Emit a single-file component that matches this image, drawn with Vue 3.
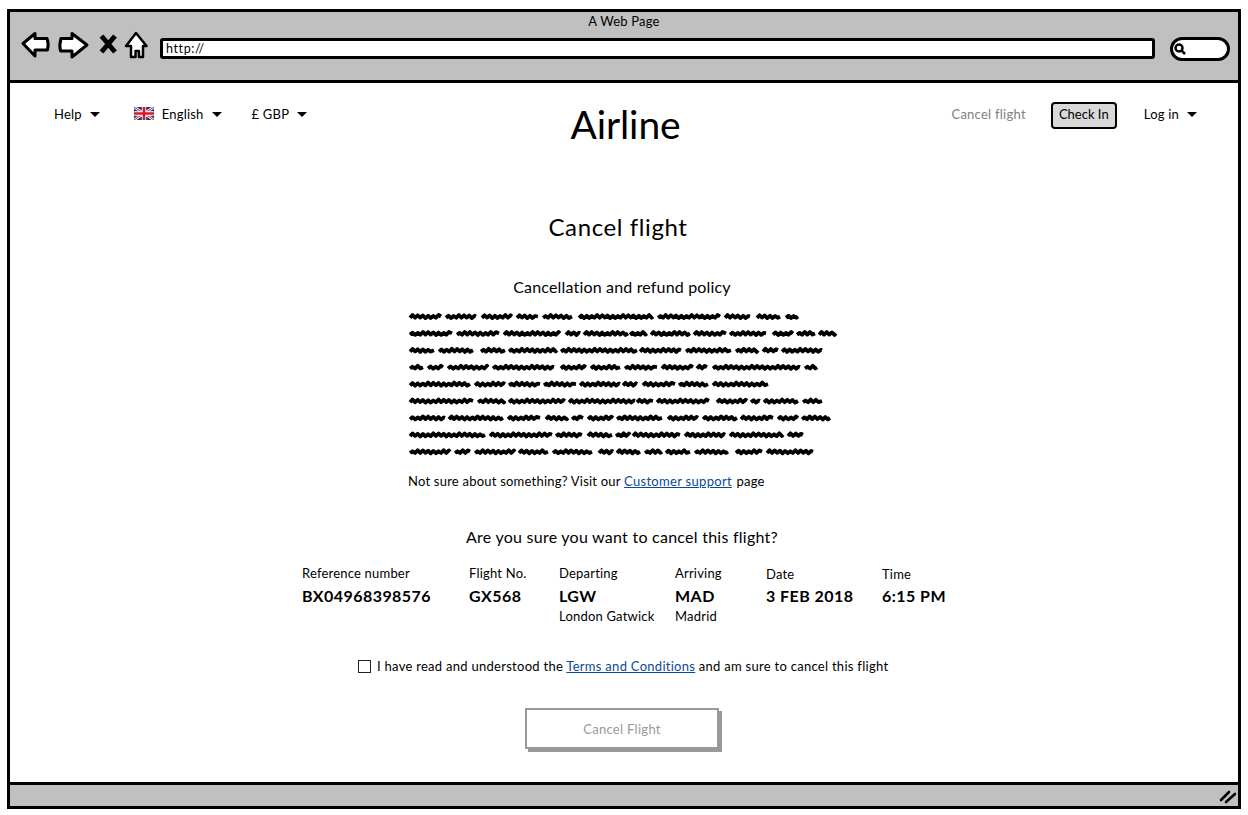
<template>
  <div class="browser">
    <header class="chrome">
      <div class="page-title">A Web Page</div>
      <div class="toolbar">
        <svg class="tool-icons" width="128" height="30" viewBox="0 0 128 30">
          <path d="M3 13.500 15 3.500V8.500H27Q29 14 27.500 20H15V26Z" fill="#fff" stroke="#000" stroke-width="3" stroke-linejoin="round" />
          <path d="M67 15 52 3.500V8.500H41Q39 15 40.500 21H52V27Z" fill="#fff" stroke="#000" stroke-width="3" stroke-linejoin="round" />
          <path d="M81.500 6 95 22M95 6 81.500 22" fill="none" stroke="#000" stroke-width="5" />
          <path d="M116 3 106 16H111V27H115.500V21H119V27H123V16H126.500Z" fill="#fff" stroke="#000" stroke-width="2.500" stroke-linejoin="round" />
        </svg>
        <div class="url-bar">http://</div>
        <div class="search-pill">
          <svg width="14" height="14" viewBox="0 0 14 14">
            <circle cx="6" cy="6" r="3.500" fill="none" stroke="#000" stroke-width="2.500" />
            <path d="M8.500 8.500 12 12" stroke="#000" stroke-width="2.500" />
          </svg>
        </div>
      </div>
    </header>

    <main class="page">
      <nav class="topnav">
        <div class="nav-group nav-left">
          <a class="nav-item">Help <i class="caret"></i></a>
          <a class="nav-item lang">
            <svg width="20" height="13" viewBox="0 0 60 39">
              <rect width="60" height="39" fill="#1f2f7a" />
              <path d="M0 0 60 39M60 0 0 39" stroke="#fff" stroke-width="8" />
              <path d="M0 0 60 39M60 0 0 39" stroke="#d4182a" stroke-width="3" />
              <path d="M30 0V39M0 19.500H60" stroke="#fff" stroke-width="13" />
              <path d="M30 0V39M0 19.500H60" stroke="#d4182a" stroke-width="8" />
            </svg>
            English <i class="caret"></i>
          </a>
          <a class="nav-item">£ GBP <i class="caret"></i></a>
        </div>
        <div class="logo">Airline</div>
        <div class="nav-group nav-right">
          <a class="nav-item muted">Cancel flight</a>
          <a class="checkin">Check In</a>
          <a class="nav-item">Log in <i class="caret"></i></a>
        </div>
      </nav>

      <h1 class="title">Cancel flight</h1>
      <h2 class="subtitle">Cancellation and refund policy</h2>

      <svg class="scribble" width="430" height="152" viewBox="0 0 430 152" role="img" aria-label="Policy text placeholder">
        <path v-for="(d, i) in scribbles" :key="i" :d="d" fill="none" stroke="#000" stroke-width="3.800" stroke-linejoin="round" />
      </svg>

      <p class="support">Not sure about something? Visit our <a class="link">Customer support</a> page</p>

      <h3 class="question">Are you sure you want to cancel this flight?</h3>

      <div class="flight">
        <div v-for="col in flight" :key="col.label" class="flight-col">
          <div class="label">{{ col.label }}</div>
          <div class="value">{{ col.value }}</div>
          <div v-if="col.place" class="place">{{ col.place }}</div>
        </div>
      </div>

      <label class="agree">
        <span class="checkbox"></span>
        <span>I have read and understood the <a class="link">Terms and Conditions</a> and am sure to cancel this flight</span>
      </label>

      <button class="cancel-btn" disabled>Cancel Flight</button>
    </main>

    <footer class="statusbar">
      <svg width="18" height="16" viewBox="0 0 18 16">
        <path d="M2 12 10 4M7 14 16 6" stroke="#000" stroke-width="2.600" stroke-linecap="round" />
      </svg>
    </footer>
  </div>
</template>

<script setup>
import { computed } from "vue";

// word extents of the scribbled paragraph, one row per line
const lines = [
  [[2, 33], [38, 68], [74, 104], [109, 130], [135, 164], [171, 245], [250, 312], [317, 342], [349, 372], [378, 390]],
  [[2, 44], [49, 91], [96, 152], [158, 172], [176, 220], [222, 239], [243, 282], [286, 318], [322, 358], [365, 385], [389, 407], [411, 428]],
  [[2, 26], [31, 65], [73, 97], [101, 149], [153, 229], [232, 273], [278, 323], [328, 350], [355, 370], [374, 414]],
  [[2, 15], [20, 35], [40, 80], [85, 146], [153, 178], [183, 212], [217, 249], [254, 285], [289, 299], [305, 392], [397, 409]],
  [[2, 62], [67, 97], [101, 132], [136, 168], [172, 212], [215, 229], [235, 267], [271, 300], [305, 360]],
  [[2, 65], [70, 97], [101, 157], [161, 227], [229, 245], [249, 301], [309, 339], [343, 352], [356, 390], [395, 414]],
  [[2, 37], [41, 95], [100, 132], [138, 160], [164, 175], [180, 205], [209, 254], [260, 290], [295, 329], [333, 365], [370, 390], [394, 422]],
  [[2, 77], [82, 144], [148, 174], [180, 204], [208, 222], [225, 272], [277, 317], [322, 375], [380, 395]],
  [[2, 42], [47, 62], [67, 107], [111, 140], [145, 184], [191, 205], [209, 232], [237, 254], [258, 282], [287, 320], [328, 354], [359, 405]],
];

const scribbles = computed(() =>
  lines.flatMap((words, row) => {
    const y = 7 + row * 16.9;
    return words.map(([from, to]) => {
      let d = `M${from} ${y + 0.8}`;
      let up = true;
      let n = from + row;
      for (let x = from + 2.5; x < to - 1; x += 2.6) {
        // uneven bumps so the ink looks hand drawn
        const bump = ((n * 7) % 5) * 0.25;
        d += ` L${x.toFixed(1)} ${(y + (up ? -1 - bump : 0.6 + bump / 2)).toFixed(1)}`;
        up = !up;
        n++;
      }
      return `${d} L${to} ${y - 0.5}`;
    });
  })
);

const flight = [
  { label: "Reference number", value: "BX04968398576" },
  { label: "Flight No.", value: "GX568" },
  { label: "Departing", value: "LGW", place: "London Gatwick" },
  { label: "Arriving", value: "MAD", place: "Madrid" },
  { label: "Date", value: "3 FEB 2018" },
  { label: "Time", value: "6:15 PM" },
];
</script>

<style>
body {
  margin: 0;
  background: #fff;
}
</style>

<style scoped>
.browser {
  box-sizing: border-box;
  width: 1234px;
  height: 800px;
  margin: 9px 0 0 7px;
  border: 3px solid #000;
  display: flex;
  flex-direction: column;
  font-family: "Lato", "Liberation Sans", sans-serif;
  font-size: 13px;
  color: #000;
}

.chrome {
  box-sizing: border-box;
  height: 71px;
  flex: none;
  background: #c0c0c0;
  border-bottom: 3px solid #000;
}

.page-title {
  text-align: center;
  line-height: 16px;
  padding-top: 1px;
  height: 18px;
  box-sizing: border-box;
  letter-spacing: 0.2px;
}

.toolbar {
  display: flex;
  align-items: center;
  height: 33px;
  padding-left: 10px;
  margin-top: 2px;
}

.tool-icons {
  flex: none;
  align-self: flex-start;
  margin: -2px 12px 0 0;
}

.url-bar {
  box-sizing: border-box;
  flex: none;
  width: 995px;
  height: 21px;
  margin-top: -1px;
  background: #fff;
  border: 3px solid #000;
  border-radius: 3px;
  font-size: 12.500px;
  line-height: 15px;
  padding-left: 3px;
  letter-spacing: 0.6px;
}

.search-pill {
  box-sizing: border-box;
  flex: none;
  width: 60px;
  height: 24px;
  margin-left: 15px;
  background: #fff;
  border: 3px solid #000;
  border-radius: 12px;
  display: flex;
  align-items: center;
}

.page {
  flex: 1;
  display: flex;
  flex-direction: column;
  align-items: center;
  min-height: 0;
}

.topnav {
  box-sizing: border-box;
  width: 100%;
  display: grid;
  grid-template-columns: 1fr auto 1fr;
  padding: 19px 41px 0 44px;
}

.nav-group {
  display: flex;
  align-items: center;
  height: 27px;
}

.nav-left {
  gap: 30px;
}

.nav-right {
  justify-content: flex-end;
  gap: 27px;
}

.nav-item {
  display: inline-flex;
  align-items: center;
  gap: 8px;
  margin-bottom: 4px;
  letter-spacing: 0.2px;
}

.lang {
  margin-left: 4px;
}

.caret {
  width: 0;
  height: 0;
  margin-top: 2px;
  border-left: 5px solid transparent;
  border-right: 5px solid transparent;
  border-top: 5px solid #000;
}

.muted {
  color: #808080;
  margin-right: -2px;
  letter-spacing: 0.25px;
}

.checkin {
  box-sizing: border-box;
  width: 66px;
  height: 27px;
  border: 2px solid #000;
  border-radius: 4px;
  background: #d9d9d9;
  text-align: center;
  line-height: 20px;
}

.logo {
  font-size: 39px;
  line-height: 48px;
  margin-top: -2px;
  letter-spacing: -0.1px;
}

.title {
  margin: 64px 0 0 -12px;
  font-size: 24px;
  line-height: 30px;
  font-weight: 400;
  letter-spacing: 0.6px;
}

.subtitle {
  margin: 35px 0 0 -4px;
  font-size: 16px;
  line-height: 20px;
  font-weight: 400;
  letter-spacing: 0.17px;
}

.scribble {
  display: block;
  margin: 13px 0 0 -2px;
}

.support {
  margin: 10px 0 0 398px;
  align-self: flex-start;
  line-height: 18px;
  letter-spacing: 0.22px;
}

.support .link {
  letter-spacing: 0.3px;
  margin-right: 1px;
}

.link {
  color: #0b4a96;
  text-decoration: underline;
}

.question {
  margin: 37px 0 0 -4px;
  font-size: 16px;
  line-height: 20px;
  font-weight: 400;
  letter-spacing: 0.25px;
}

.flight {
  align-self: flex-start;
  margin: 17px 0 0 292px;
  display: grid;
  grid-template-columns: 167px 90px 116px 91px 116px auto;
  line-height: 20px;
}

.label {
  line-height: 18px;
  letter-spacing: 0.2px;
}

.flight-col:nth-child(n + 5) .label {
  padding-top: 1px;
}

.flight-col:nth-child(n + 5) .value {
  margin-top: 2px;
}

.value {
  margin-top: 3px;
  font-size: 16px;
  line-height: 22px;
  font-weight: 700;
  letter-spacing: 0.45px;
}

.place {
  line-height: 18px;
  letter-spacing: 0.2px;
}

.agree {
  display: flex;
  align-items: center;
  gap: 6px;
  align-self: flex-start;
  margin: 32px 0 0 348px;
  letter-spacing: 0.28px;
  line-height: 18px;
}

.checkbox {
  box-sizing: border-box;
  width: 13px;
  height: 13px;
  border: 1.500px solid #222;
}

.cancel-btn {
  box-sizing: border-box;
  width: 194px;
  height: 41px;
  margin: 33px 0 0 -4px;
  background: #fff;
  border: 2px solid #999;
  box-shadow: 3px 3px 0 #999;
  color: #999;
  font: inherit;
  letter-spacing: 0.3px;
  padding: 0;
}

.statusbar {
  box-sizing: border-box;
  height: 24px;
  flex: none;
  background: #c0c0c0;
  border-top: 3px solid #000;
  display: flex;
  justify-content: flex-end;
  align-items: center;
  padding-right: 1px;
}
</style>
